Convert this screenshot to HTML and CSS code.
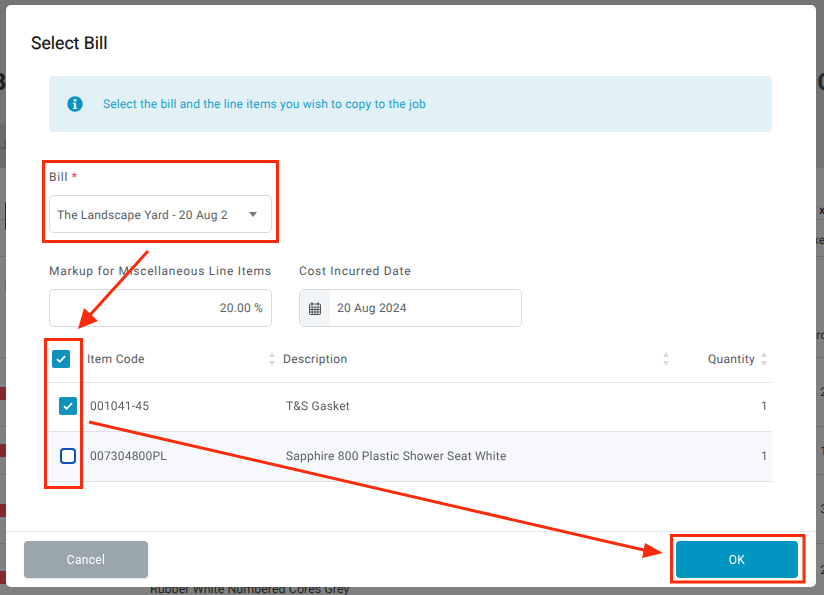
FILE: index.html
```html
<!DOCTYPE html>
<html lang="en">
<head>
<meta charset="utf-8">
<title>Select Bill</title>
<link rel="stylesheet" href="styles.css">
</head>
<body>
<div class="page" aria-hidden="true">
  <div class="bg-title"><span>B</span><span>C</span></div>
  <div class="bg-tabs"><span>Jo</span></div>
  <div class="bg-sub"><i class="bg-bar"></i><span class="bg-x">x</span></div>
  <div class="bg-sub2"><span class="bg-x">xe</span></div>
  <div class="bg-row bg-head"><i class="bg-bar small"></i><span class="bg-num">ro</span></div>
  <div class="bg-row r1"><i class="tag"></i><span class="bg-num">2</span></div>
  <div class="bg-row r2"><i class="tag"></i><span class="bg-num">1</span></div>
  <div class="bg-row r3"><i class="tag"></i><span class="bg-num">3</span></div>
  <div class="bg-row r4"><i class="tag"></i><span class="bg-under">Rubber White Numbered Cores Grey</span><span class="bg-num">2</span></div>
</div>

<div class="modal">
  <h1 class="modal-title">Select Bill</h1>
  <div class="modal-body">
    <div class="alert">
      <svg class="alert-icon" width="16" height="16" viewBox="0 0 16 16"><circle cx="8" cy="8" r="7.7" fill="#0a94c0"/><circle cx="8" cy="4.2" r="1.5" fill="#e2f1f6"/><path d="M5.9 6.7h3.2v5h1v1.3H5.9v-1.3h1v-3.7h-1z" fill="#e2f1f6"/></svg>
      <span>Select the bill and the line items you wish to copy to the job</span>
    </div>
    <div class="field bill-field">
      <label class="label">Bill <b class="req">*</b></label>
      <div class="control select">
        <span>The Landscape Yard - 20 Aug 2</span>
        <i class="caret"></i>
      </div>
    </div>
    <div class="field-row">
      <div class="field">
        <label class="label">Markup for Miscellaneous Line Items</label>
        <div class="control number">20.00 %</div>
      </div>
      <div class="field">
        <label class="label">Cost Incurred Date</label>
        <div class="control date">
          <span class="date-addon">
            <svg width="12" height="13" viewBox="0 0 12 13" fill="none" stroke="#555" stroke-width="1"><rect x=".5" y="2" width="11" height="10.5" rx=".8"/><path d="M.5 5h11M.5 7.5h11M.5 10h11M3.2 5v7.5M6 5v7.5M8.8 5v7.5"/><path d="M3 .5v3M9 .5v3" stroke-width="1.6"/></svg>
          </span>
          <span class="date-value">20 Aug 2024</span>
        </div>
      </div>
    </div>
    <div class="table">
      <div class="tr th">
        <span class="cell-check"><span class="check on"><svg width="10" height="8" viewBox="0 0 10 8" fill="none" stroke="#fff" stroke-width="1.7"><path d="M1 4.2 3.7 6.8 9 1.2"/></svg></span></span>
        <span class="cell-code">Item Code<i class="sort"></i></span>
        <span class="cell-desc">Description<i class="sort"></i></span>
        <span class="cell-qty">Quantity<i class="sort"></i></span>
      </div>
      <div class="tr row row-a">
        <span class="cell-check"><span class="check on"><svg width="10" height="8" viewBox="0 0 10 8" fill="none" stroke="#fff" stroke-width="1.7"><path d="M1 4.2 3.7 6.8 9 1.2"/></svg></span></span>
        <span class="cell-code">001041-45</span>
        <span class="cell-desc">T&amp;S Gasket</span>
        <span class="cell-qty">1</span>
      </div>
      <div class="tr row row-b">
        <span class="cell-check"><span class="check off"></span></span>
        <span class="cell-code">007304800PL</span>
        <span class="cell-desc">Sapphire 800 Plastic Shower Seat White</span>
        <span class="cell-qty">1</span>
      </div>
    </div>
  </div>
  <div class="modal-footer">
    <button class="btn btn-cancel" type="button">Cancel</button>
    <button class="btn btn-ok" type="button">OK</button>
  </div>
</div>

<svg class="marks" width="824" height="595" viewBox="0 0 824 595" fill="none" aria-hidden="true">
  <g stroke="#fb2c0c" stroke-width="3">
    <rect x="43.5" y="161.5" width="234" height="80"/>
    <rect x="45.5" y="339.5" width="36" height="148"/>
    <rect x="671.5" y="535.5" width="132.5" height="46.5"/>
    <path d="M148 251 90 315M89 422 648 551"/>
  </g>
  <path d="M78 329 84 308 98 321zM663 553 645 543 642 558z" fill="#fb2c0c"/>
</svg>
</body>
</html>
```

FILE: styles.css
```css
* { box-sizing: border-box; }
html, body { margin: 0; height: 595px; overflow: hidden; }
body {
  position: relative;
  width: 824px;
  font-family: Roboto, "Liberation Sans", sans-serif;
  text-rendering: geometricPrecision;
  color: #4e5257;
  background: #808080;
}

/* Dimmed page behind the dialog */
.page { display: flex; flex-direction: column; height: 595px; overflow: hidden; color: #222; }
.bg-title { height: 124px; background: #747474; display: flex; justify-content: space-between; align-items: flex-end; padding: 0 0 28px; font-size: 24px; font-weight: 700; line-height: 28px; color: #1f1f1f; }
.bg-title span:first-child { margin-left: -9px; }
.bg-title span:last-child { margin-right: -9px; color: #232a30; }
.bg-tabs { height: 44px; background: linear-gradient(90deg, #6c6c6c 0 8px, #747474 8px); font-size: 13px; color: #4a4a4a; line-height: 44px; }
.bg-sub, .bg-sub2 { position: relative; display: flex; justify-content: flex-end; font-size: 12px; font-weight: 500; }
.bg-sub { height: 52px; padding-top: 35px; border-bottom: 1px solid #6e6e6e; }
.bg-sub2 { height: 37px; padding-top: 13px; border-bottom: 1px solid #6e6e6e; font-weight: 400; }
.bg-x { margin-right: -1px; }
.bg-bar { position: absolute; left: 5px; top: 34px; width: 2px; height: 28px; background: #2a2a2a; }
.bg-bar.small { top: 23px; height: 10px; background: #606060; }
.bg-row { position: relative; display: flex; align-items: center; justify-content: flex-end; border-bottom: 1px solid #6e6e6e; font-size: 12px; }
.bg-head { height: 101px; padding-top: 56px; }
.r1 { height: 69px; }
.r2 { height: 48px; }
.r3 { height: 69px; }
.r4 { flex: 1; border-bottom: 0; }
.bg-num { margin-right: -3px; }
.tag { position: absolute; left: 0; top: 29px; width: 8px; height: 13px; background: #7f2a2e; border-radius: 0 2px 2px 0; }
.r2 .tag { top: 17px; }
.r4 .tag { top: 27px; }
.bg-under { position: absolute; left: 150px; top: 38px; font-size: 12.5px; white-space: nowrap; }

/* Dialog */
.modal {
  position: absolute;
  left: 6px;
  top: 5px;
  width: 810px;
  height: 582px;
  background: #fff;
  border-radius: 5px;
  display: flex;
  flex-direction: column;
  will-change: opacity;
}
.modal-title { margin: 0; padding: 29px 0 0 25px; height: 71px; font-size: 17.6px; line-height: 20px; font-weight: 400; color: #111; -webkit-text-stroke: .15px #111; }
.modal-body { flex: 1; padding: 0 44px 0 43px; display: flex; flex-direction: column; }
.alert { height: 56px; display: flex; align-items: center; gap: 20px; padding-left: 18px; border-radius: 4px; background: #e2f1f6; color: #1ea0c9; font-size: 12px; letter-spacing: .15px; }
.alert-icon { flex: none; }

.field { display: flex; flex-direction: column; width: 223px; }
.bill-field { margin-top: 37px; }
.label { height: 26px; padding-top: 1px; font-size: 12px; line-height: 14px; letter-spacing: .72px; color: #55595e; }
.req { color: #f0384f; font-weight: 400; }
.control { height: 38px; border: 1px solid #d9dcdf; border-radius: 5px; font-size: 12px; color: #5b5f64; display: flex; align-items: center; letter-spacing: .19px; }
.select { padding: 1px 14px 0 7px; justify-content: space-between; }
.caret { width: 0; height: 0; border: 4.5px solid transparent; border-top: 5px solid #777; border-bottom: 0; }
.field-row { display: flex; gap: 27px; margin-top: 30px; }
.number { justify-content: flex-end; padding-right: 8px; }
.date { overflow: hidden; }
.date-addon { width: 30px; height: 100%; background: #f1f5f8; display: flex; align-items: center; justify-content: center; }
.date-value { padding-left: 7px; }

/* Table */
.table { margin-top: 11px; width: 723px; font-size: 12px; }
.tr { display: grid; grid-template-columns: 38px 196px 389px 100px; align-items: center; }
.th { height: 45px; padding-bottom: 2px; border-bottom: 1px solid #e0e3e8; color: #55595e; letter-spacing: .33px; }
.row { color: #5b5f64; border-bottom: 1px solid #dfe2e6; letter-spacing: .2px; }
.row-a { height: 49px; padding-bottom: 2px; }
.row-b { height: 50px; padding-bottom: 1px; background: #f6f8fb; }
.cell-check { display: flex; }
.row .cell-check { padding-left: 10px; }
.th .cell-check { padding-left: 3px; }
.check { width: 18px; height: 18px; border-radius: 2px; display: flex; align-items: center; justify-content: center; }
.check.on { background: #0f93bd; }
.check.off { width: 16px; height: 16px; margin: 1px; border: 2px solid #0b52c0; border-radius: 4px; background: #fff; }
.cell-code, .cell-desc { display: flex; align-items: center; justify-content: space-between; }
.th .cell-code { padding-right: 7px; }
.th .cell-desc { padding-right: 2px; }
.row .cell-code { padding-left: 3px; }
.row .cell-desc { padding-left: 3px; }
.cell-qty { display: flex; align-items: center; justify-content: flex-end; gap: 6px; padding-right: 4px; }
.sort { position: relative; display: block; width: 7px; height: 12px; flex: none; }
.sort::before, .sort::after { content: ""; position: absolute; left: 0; border: 3.5px solid transparent; }
.sort::before { top: -1px; border-top: 0; border-bottom: 5px solid #d8dadd; }
.sort::after { bottom: -1px; border-bottom: 0; border-top: 5px solid #d8dadd; }

/* Footer */
.modal-footer { height: 56px; border-top: 1px solid #e4e6e9; padding: 9px 18px 0; display: flex; justify-content: space-between; align-items: flex-start; }
.btn { height: 37px; border: 0; border-radius: 4px; font: 400 12px Roboto, "Liberation Sans", sans-serif; color: #fff; letter-spacing: .3px; }
.btn-cancel { width: 124px; background: #9aa6ad; box-shadow: 0 1px 2px rgba(0,0,0,.12); }
.btn-ok { width: 122px; background: #0096c1; }

/* Annotation overlay */
.marks { position: absolute; left: 0; top: 0; pointer-events: none; }
```
